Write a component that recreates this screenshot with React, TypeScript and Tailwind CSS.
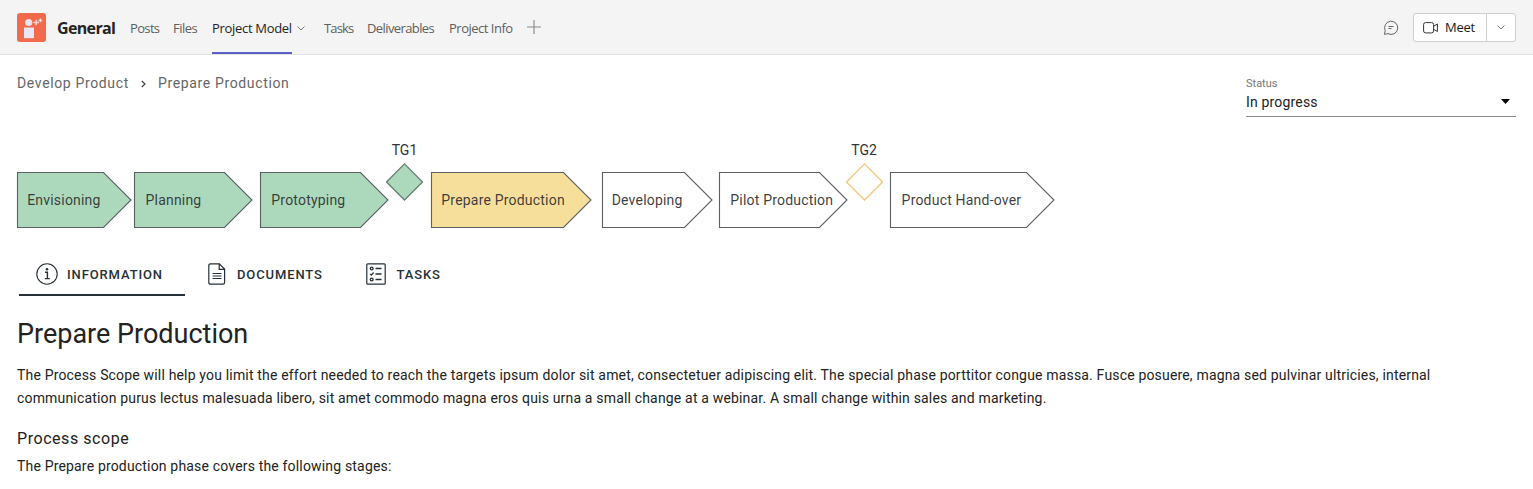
import React from "react";

const segoe = "font-['Open_Sans','Noto_Sans',sans-serif]";

type Stage = {
  kind: "stage";
  label: string;
  width: number;
  fill: string;
  pad: number;
  gap: number;
};
type Gate = { kind: "gate"; label: string; fill: string; stroke: string; gap: number };

const GREEN = "#acd8bb";
const YELLOW = "#f6df9a";

const flow: (Stage | Gate)[] = [
  { kind: "stage", label: "Envisioning", width: 114, fill: GREEN, pad: 10.2, gap: 0 },
  { kind: "stage", label: "Planning", width: 118, fill: GREEN, pad: 11.5, gap: 3 },
  { kind: "stage", label: "Prototyping", width: 128, fill: GREEN, pad: 11.3, gap: 8 },
  { kind: "gate", label: "TG1", fill: GREEN, stroke: "#6b7f76", gap: -2 },
  { kind: "stage", label: "Prepare Production", width: 160, fill: YELLOW, pad: 10.3, gap: 8 },
  { kind: "stage", label: "Developing", width: 110, fill: "#ffffff", pad: 9.4, gap: 11.3 },
  { kind: "stage", label: "Pilot Production", width: 128, fill: "#ffffff", pad: 11, gap: 7 },
  { kind: "gate", label: "TG2", fill: "#ffffff", stroke: "#f5c57d", gap: -1.7 },
  { kind: "stage", label: "Product Hand-over", width: 164, fill: "#ffffff", pad: 11.4, gap: 7.6 },
];

function StageShape({ s }: { s: Stage }) {
  const w = s.width;
  return (
    <div className="relative mt-[30px] flex h-14 shrink-0 items-center" style={{ width: w, marginLeft: s.gap, paddingLeft: s.pad }}>
      <svg className="absolute inset-0 overflow-visible" width={w} height="56" fill={s.fill} stroke="#5c6064" strokeWidth="1.1">
        <path d={`M.5 .5H${w - 27.5}L${w} 28L${w - 27.5} 55.5H.5Z`} />
      </svg>
      <span className="relative whitespace-nowrap text-[14px] leading-5 tracking-[0.2px] text-[#333]/95">{s.label}</span>
    </div>
  );
}

function GateShape({ g }: { g: Gate }) {
  return (
    <div className="flex w-[37px] shrink-0 flex-col items-center" style={{ marginLeft: g.gap }}>
      <span className="h-[21px] text-[14px] leading-4 text-[#333]">{g.label}</span>
      <svg width="37" height="38" fill={g.fill} stroke={g.stroke} strokeWidth="1.3">
        <path d="M18.5 .9L36.5 19L18.5 37L.5 19Z" />
      </svg>
    </div>
  );
}

function Chevron({ className }: { className: string }) {
  return (
    <svg className={className} width="8" height="5" fill="none" stroke="#777" strokeWidth="1">
      <path d="M.5 .5L4 4L7.5 .5" />
    </svg>
  );
}

function Header() {
  return (
    <header className={`flex h-[55px] items-start border-b border-[#e3e3e3] bg-[#f4f4f4] px-[17px] text-[#5f5e5c] ${segoe}`}>
      <svg className="mt-[13px] shrink-0" width="29" height="29">
        <rect width="29" height="29" rx="3" fill="#f26a4b" />
        <g fill="#efe4f2">
          <circle cx="11.7" cy="9.5" r="3.6" />
          <path d="M7 14.5h10v10.7H7z" />
        </g>
        <path d="M19.2 6.8v5.4M16.5 9.5h5.4M23.4 5.4v3.8M21.5 7.3h3.8" stroke="#f8dde0" strokeWidth="1.3" />
      </svg>
      <h1 className="ml-[11px] mt-4 w-[73px] whitespace-nowrap text-[16px] font-bold leading-6 tracking-[-0.65px] text-[#242424]">General</h1>
      <nav className="flex whitespace-nowrap pt-[18px] text-[13px] leading-5">
        <a className="w-[43px] tracking-[-0.65px]">Posts</a>
        <a className="w-[39px] tracking-[-0.5px]">Files</a>
        <a className="h-9 w-20 border-b-2 border-[#5b5fc7] tracking-[-0.31px] text-[#242424]">Project Model</a>
        <Chevron className="ml-[5px] mt-2" />
        <a className="ml-[19px] w-[43px] tracking-[-0.85px]">Tasks</a>
        <a className="w-[82px] tracking-[-0.6px]">Deliverables</a>
        <a className="w-[78px] tracking-[-0.5px]">Project Info</a>
        <svg className="mt-0.5" width="14" height="14" stroke="#888" strokeWidth="1.1">
          <path d="M7 0v14M0 7h14" />
        </svg>
      </nav>
      <svg className="ml-auto mt-5" width="16" height="16" fill="none" stroke="#666" strokeWidth="1">
        <path d="M1.4 14.4L2.2 10.6A6.6 6.6 0 1 1 5 13.6Z" />
        <path d="M5.5 6.5h5M5.5 8.5h3" />
      </svg>
      <div className="ml-[14px] mt-[13px] flex h-[29px] w-[103px] items-center rounded-[3px] border border-[#cfcfcf] bg-white text-[#242424]">
        <svg className="ml-[9px] shrink-0" width="16" height="12" fill="none" stroke="#333" strokeWidth="1">
          <rect x=".6" y=".6" width="10" height="10.3" rx="2" />
          <path d="M11 4L14.4 2V9.6L11 7.5" />
        </svg>
        <span className="-mt-0.5 ml-[6px] w-[41px] text-[13px] font-medium leading-5 tracking-[-0.3px] text-[#1a1a1a]">Meet</span>
        <span className="flex h-full flex-1 items-center justify-center border-l border-[#cfcfcf]">
          <Chevron className="" />
        </span>
      </div>
    </header>
  );
}

function Tabs() {
  return (
    <div className="ml-0.5 mt-6 flex h-11 text-[13px] font-medium leading-5 tracking-[0.88px] text-[#263038] [&_span]:mt-0.5">
      <div className="flex w-[166px] items-center border-b-2 border-[#263038] pl-[17px] pt-0.5">
        <svg width="22" height="22" fill="none" stroke="#263038" strokeWidth="1.1">
          <circle cx="11" cy="11" r="10.2" />
          <path d="M9 9.3h2.4v6.2M8.8 15.6h5" strokeWidth="1.4" />
          <circle cx="11" cy="6.2" r="1.3" fill="#263038" stroke="none" />
        </svg>
        <span className="ml-[9px]">INFORMATION</span>
      </div>
      <div className="flex w-[158px] items-center border-b-2 border-transparent pl-[23px] pt-0.5">
        <svg width="18" height="22" fill="none" stroke="#263038" strokeWidth="1.2">
          <path d="M3 .8H11.3L16.6 6v13.5Q16.6 21.2 15 21.2H2.5Q.8 21.2 .8 19.5V2.5Q.8 .8 2.5 .8ZM11.2 1v5.3h5.3" />
          <path d="M4.5 10.5h9M4.5 13h9M4.5 15.5h9" />
        </svg>
        <span className="ml-[11px]">DOCUMENTS</span>
      </div>
      <div className="flex items-center border-b-2 border-transparent pl-[23px] pt-0.5">
        <svg width="20" height="22" fill="none" stroke="#263038" strokeWidth="1.2">
          <rect x=".8" y=".8" width="18.4" height="20.4" rx="1" />
          <path d="M9.5 5.5h6M9.5 11h6M9.5 16.5h6" strokeWidth="1.4" />
          <circle cx="5.7" cy="5.5" r="1.4" strokeWidth="1.4" />
          <circle cx="5.7" cy="16.5" r="1.4" strokeWidth="1.4" />
          <path d="M4 10.8l1.3 1.3 2.3-2.6" />
        </svg>
        <span className="ml-[10.5px]">TASKS</span>
      </div>
    </div>
  );
}

export default function App() {
  return (
    <div className="h-[489px] w-[1533px] overflow-hidden bg-white font-['Roboto',sans-serif] text-[#222]">
      <Header />
      <main className="px-[17px]">
        <div className="flex h-[87px] justify-between">
          <div className="mt-[18px] flex h-5 items-center whitespace-nowrap text-[14px] leading-5 tracking-[0.64px] text-[#666] [&>span]:-mt-px">
            <span className="w-[124px]">Develop Product</span>
            <svg className="mr-[12px] mt-px" width="5" height="8" fill="none" stroke="#444" strokeWidth="1.2">
              <path d="M.8 1L4 4L.8 7" />
            </svg>
            <span>Prepare Production</span>
          </div>
          <div className="mt-[21px] h-[41px] w-[270px] border-b border-[#8b8b8b]">
            <div className="text-[11px] leading-[15px] text-[#767676]">Status</div>
            <div className="mt-px flex items-center justify-between text-[14px] leading-5 tracking-[0.17px]">
              <span>In progress</span>
              <svg className="-mt-0.5 mr-[6px]" width="9" height="5">
                <path d="M0 0h9L4.5 5Z" fill="#000" />
              </svg>
            </div>
          </div>
        </div>
        <div className="flex h-[86px] items-start">
          {flow.map((f) => (f.kind === "stage" ? <StageShape key={f.label} s={f} /> : <GateShape key={f.label} g={f} />))}
        </div>
        <Tabs />
        <h2 className="mt-[22px] text-[27px] leading-8">Prepare Production</h2>
        <p className="mt-[14px] whitespace-nowrap text-[14px] leading-[23px] tracking-[0.173px]">
          The Process Scope will help you limit the effort needed to reach the targets ipsum dolor sit amet, consectetuer adipiscing elit. The special phase porttitor congue massa. Fusce posuere, magna sed pulvinar ultricies, internal
          <br />
          communication purus lectus malesuada libero, sit amet commodo magna eros quis urna a small change at a webinar. A small change within sales and marketing.
        </p>
        <h3 className="mt-[17px] text-[16px] leading-6 tracking-[0.55px]">Process scope</h3>
        <p className="mt-[4px] text-[14px] leading-[23px] tracking-[0.173px]">The Prepare production phase covers the following stages:</p>
      </main>
    </div>
  );
}
